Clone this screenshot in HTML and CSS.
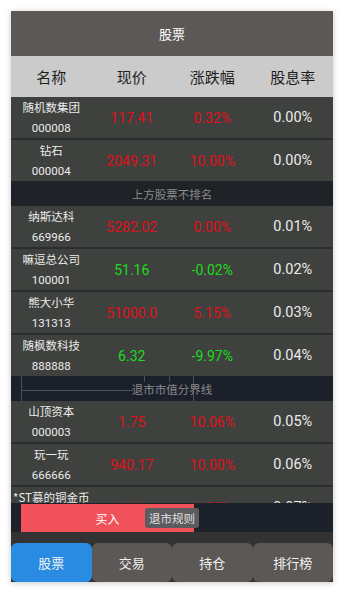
FILE: index.html
```html
<!DOCTYPE html>
<html lang="zh">
<head>
<meta charset="utf-8">
<title>股票</title>
<link rel="stylesheet" href="styles.css">
</head>
<body>
<div class="app">
  <div class="title">股票</div>
  <div class="thead">
    <div class="th">名称</div>
    <div class="th">现价</div>
    <div class="th">涨跌幅</div>
    <div class="th">股息率</div>
  </div>
  <div class="list">
    <div class="row">
      <div class="name"><span class="n">随机数集团</span><span class="c">000008</span></div>
      <div class="num up">117.41</div><div class="num up">0.32%</div><div class="rate">0.00%</div>
    </div>
    <div class="row">
      <div class="name"><span class="n">钻石</span><span class="c">000004</span></div>
      <div class="num up">2049.31</div><div class="num up">10.00%</div><div class="rate">0.00%</div>
    </div>
    <div class="divider">上方股票不排名</div>
    <div class="row">
      <div class="name"><span class="n">纳斯达科</span><span class="c">669966</span></div>
      <div class="num up">5282.02</div><div class="num up">0.00%</div><div class="rate">0.01%</div>
    </div>
    <div class="row">
      <div class="name"><span class="n">嘛逗总公司</span><span class="c">100001</span></div>
      <div class="num down">51.16</div><div class="num down">-0.02%</div><div class="rate">0.02%</div>
    </div>
    <div class="row">
      <div class="name"><span class="n">熊大小华</span><span class="c">131313</span></div>
      <div class="num up">51000.0</div><div class="num up">5.15%</div><div class="rate">0.03%</div>
    </div>
    <div class="row">
      <div class="name"><span class="n">随枫数科技</span><span class="c">888888</span></div>
      <div class="num down">6.32</div><div class="num down">-9.97%</div><div class="rate">0.04%</div>
    </div>
    <div class="divider ghosted">
      <span class="ghost gv1"></span><span class="ghost gh"></span><span class="ghost gv2"></span><span class="ghost gv3"></span><span class="ghost gv4"></span>
      <span class="label">退市市值分界线</span>
    </div>
    <div class="row">
      <div class="name"><span class="n">山顶资本</span><span class="c">000003</span></div>
      <div class="num up">1.75</div><div class="num up">10.06%</div><div class="rate">0.05%</div>
    </div>
    <div class="row">
      <div class="name"><span class="n">玩一玩</span><span class="c">666666</span></div>
      <div class="num up">940.17</div><div class="num up">10.00%</div><div class="rate">0.06%</div>
    </div>
    <div class="row">
      <div class="name"><span class="n">*ST慕的铜金币</span><span class="c">777777</span></div>
      <div class="num up">1.11</div><div class="num up">4.99%</div><div class="rate">0.07%</div>
    </div>
  </div>
  <div class="footer">
    <div class="actions">
      <div class="buy">买入</div>
      <div class="tip">退市规则</div>
    </div>
    <div class="tabs">
      <div class="tab active">股票</div>
      <div class="tab">交易</div>
      <div class="tab">持仓</div>
      <div class="tab">排行榜</div>
    </div>
  </div>
</div>
</body>
</html>
```

FILE: styles.css
```css
html, body {
  margin: 0;
  padding: 0;
  background: #ffffff;
}
body {
  padding: 11px;
  font-family: Roboto, "Noto Sans CJK SC", sans-serif;
}
.app {
  width: 322px;
  height: 571px;
  display: flex;
  flex-direction: column;
  box-shadow: 0 1px 6px rgba(0, 0, 0, 0.22);
  overflow: hidden;
}
.title {
  height: 45px;
  flex: none;
  background: #5c5856;
  color: #ffffff;
  font-size: 13px;
  display: flex;
  align-items: center;
  justify-content: center;
  font-family: "Noto Sans CJK SC", sans-serif;
}
.thead {
  height: 41px;
  flex: none;
  background: #cbcbcb;
  display: grid;
  grid-template-columns: repeat(4, 1fr);
  align-items: center;
}
.th {
  text-align: center;
  color: #1e1e1e;
  font-size: 15px;
  font-family: "Noto Sans CJK SC", sans-serif;
}
.list {
  flex: 1;
  overflow: hidden;
  background: #2a2c2d;
  display: flex;
  flex-direction: column;
}
.row {
  height: 41px;
  flex: none;
  background: #3f413e;
  display: grid;
  grid-template-columns: repeat(4, 1fr);
  align-items: center;
}
.row + .row {
  margin-top: 2px;
}
.name {
  display: flex;
  flex-direction: column;
  align-items: center;
  color: #ececec;
  white-space: nowrap;
  font-size: 11.5px;
}
.name .n {
  line-height: 21px;
  height: 21px;
  font-family: "Noto Sans CJK SC", sans-serif;
}
.name .c {
  line-height: 20px;
  height: 20px;
}
.num {
  text-align: center;
  font-size: 14px;
  font-weight: 400;
}
.up { color: #e0101a; }
.down { color: #1cdc1c; }
.rate {
  text-align: center;
  font-size: 14.5px;
  font-weight: 400;
  color: #ececec;
}
.divider {
  height: 25px;
  flex: none;
  background: #1f2226;
  color: #8a8a8a;
  font-size: 11.5px;
  display: flex;
  align-items: center;
  justify-content: center;
  font-family: "Noto Sans CJK SC", sans-serif;
}
.ghosted {
  position: relative;
  background: #1b202a;
}
.ghosted .label {
  position: relative;
}
.ghost {
  position: absolute;
  background: #4b4f56;
}
.gv1 { left: 10px; top: 0; bottom: 0; width: 1px; }
.gh { left: 10px; width: 112px; top: 14px; height: 1px; }
.gv2 { left: 133px; top: 0; height: 6px; width: 1px; }
.gv3 { left: 158px; top: 0; height: 6px; width: 1px; }
.gv4 { left: 182px; top: 0; bottom: 0; width: 1px; }
.footer {
  flex: none;
  background: #333333;
}
.actions {
  position: relative;
  height: 29px;
  background: #1c212a;
  padding: 1px 0 0 10px;
  box-sizing: border-box;
}
.buy {
  width: 173px;
  height: 28px;
  background: #f0515b;
  color: #ffffff;
  font-size: 12px;
  display: flex;
  align-items: center;
  justify-content: center;
  font-family: "Noto Sans CJK SC", sans-serif;
}
.tip {
  position: absolute;
  left: 134px;
  top: 5px;
  width: 54px;
  height: 20px;
  border-radius: 3px;
  background: #5b5c5e;
  color: #e2e2e2;
  font-size: 11.5px;
  display: flex;
  align-items: center;
  justify-content: center;
  font-family: "Noto Sans CJK SC", sans-serif;
}
.tabs {
  margin-top: 11px;
  height: 39px;
  display: grid;
  grid-template-columns: repeat(4, 1fr);
}
.tab {
  background: #5c5856;
  border-radius: 6px;
  color: #f2f2f2;
  font-size: 13px;
  display: flex;
  align-items: center;
  justify-content: center;
  font-family: "Noto Sans CJK SC", sans-serif;
}
.tab.active {
  background: #2a8be2;
}
```
